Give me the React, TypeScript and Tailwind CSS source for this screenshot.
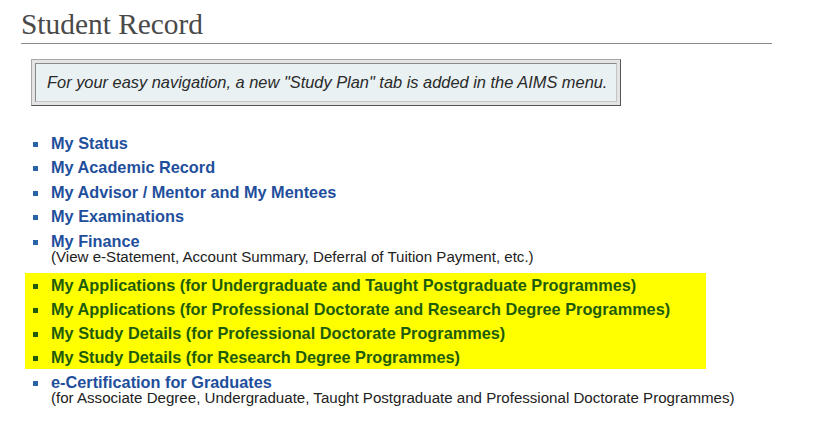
type Item = { label: string; sub?: string };

const items: Item[] = [
  { label: 'My Status' },
  { label: 'My Academic Record' },
  { label: 'My Advisor / Mentor and My Mentees' },
  { label: 'My Examinations' },
  { label: 'My Finance', sub: '(View e-Statement, Account Summary, Deferral of Tuition Payment, etc.)' },
];

const highlighted: Item[] = [
  { label: 'My Applications (for Undergraduate and Taught Postgraduate Programmes)' },
  { label: 'My Applications (for Professional Doctorate and Research Degree Programmes)' },
  { label: 'My Study Details (for Professional Doctorate Programmes)' },
  { label: 'My Study Details (for Research Degree Programmes)' },
];

const last: Item = {
  label: 'e-Certification for Graduates',
  sub: '(for Associate Degree, Undergraduate, Taught Postgraduate and Professional Doctorate Programmes)',
};

function Row({ item, green }: { item: Item; green?: boolean }) {
  return (
    <li className="flex items-start">
      <span
        className={`mt-[11px] ml-[8px] mr-[13px] w-[5px] h-[5px] shrink-0 ${green ? 'bg-[#1e5c0c]' : 'bg-[#2a64a8]'}`}
      />
      <div className="flex flex-col">
        <a
          href="#"
          className={`text-[16.3px] font-bold ${green ? 'leading-[24px] text-[#1e5c0c]' : 'leading-[24.4px] text-[#1f4f9c]'}`}
        >
          {item.label}
        </a>
        {item.sub && (
          <span className="text-[15.1px] leading-[16px] -mt-[4px] mb-[3px] text-[#222]">{item.sub}</span>
        )}
      </div>
    </li>
  );
}

export default function App() {
  return (
    <div className="min-h-[438px] bg-white font-['Liberation_Sans',Arial,sans-serif] pl-[21px] pr-[43px] pt-[6px]">
      <h1 className="font-['Liberation_Serif','Times_New_Roman',serif] text-[29.4px] leading-[36px] text-[#4a4a4a] border-b border-[#8a8a8a] pb-[1px]">
        Student Record
      </h1>

      {/* Notice box */}
      <div className="ml-[10px] mt-[15px] w-[590px] border border-t-[#a8a8a8] border-l-[#a8a8a8] border-b-[#555] border-r-[#555] bg-[#e4e4e4] p-[3px]">
        <div className="border border-t-[#8a8a8a] border-l-[#8a8a8a] border-b-[#c4c4c4] border-r-[#c4c4c4] bg-[#e9f1f3] h-[39px] flex items-center pl-[11px]">
          <p className="italic text-[16.4px] text-[#2a2a2a]">
            For your easy navigation, a new "Study Plan" tab is added in the AIMS menu.
          </p>
        </div>
      </div>

      <ul className="ml-[4px] mt-[25px]">
        {items.map((it) => (
          <Row key={it.label} item={it} />
        ))}
      </ul>
      <ul className="ml-[4px] mt-[5px] w-[681px] bg-[#ffff00]">
        {highlighted.map((it) => (
          <Row key={it.label} item={it} green />
        ))}
      </ul>
      <ul className="ml-[4px] mt-[1px]">
        <Row item={last} />
      </ul>
    </div>
  );
}
